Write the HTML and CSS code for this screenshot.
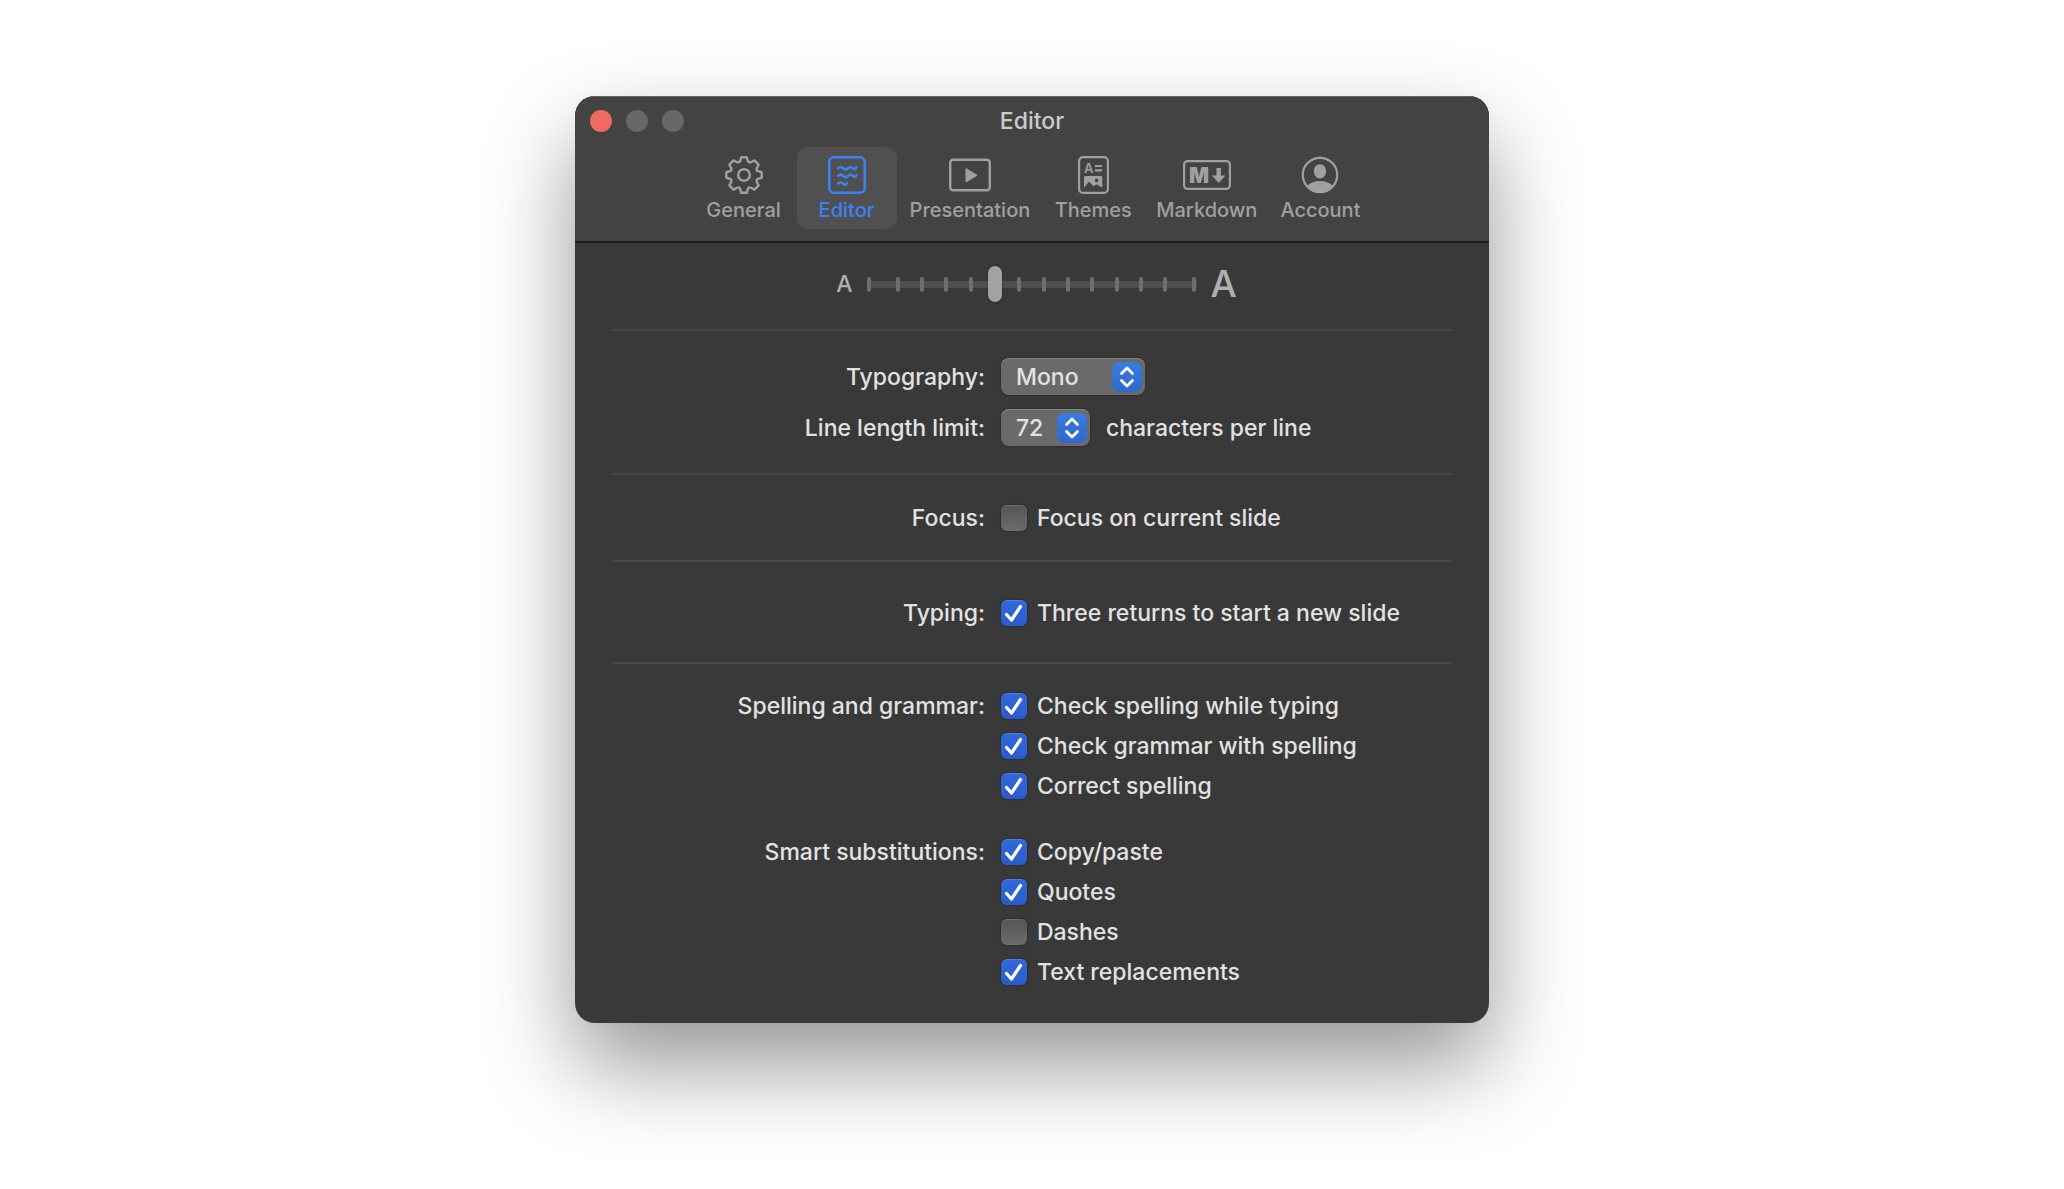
FILE: index.html
```html
<!DOCTYPE html>
<html lang="en">
<head>
  <meta charset="UTF-8">
  <meta name="viewport" content="width=device-width, initial-scale=1.0">
  <title>Editor</title>
  <link rel="stylesheet" href="styles.css">
</head>
<body>

  <div class="window">
    <header class="titlebar">
      <div class="title-row">
        <div class="lights">
          <button class="light close" aria-label="Close"></button>
          <button class="light" aria-label="Minimize"></button>
          <button class="light" aria-label="Zoom"></button>
        </div>
        <h1>Editor</h1>
      </div>

      <nav class="toolbar">
        <button class="tab">
          <svg width="38" height="38" viewBox="-19 -19 38 38" fill="none" stroke="currentColor" stroke-width="2.4" stroke-linejoin="round">
            <path d="M-2.8-17.7H2.8L3.8-14Q4.7-12 6.9-12.8L10.4-14.6L14.6-10.4L12.8-6.9Q12-4.7 14-3.8L17.7-2.8V2.8L14 3.8Q12 4.7 12.8 6.9L14.6 10.4L10.4 14.6L6.9 12.8Q4.7 12 3.8 14L2.8 17.7H-2.8L-3.8 14Q-4.7 12-6.9 12.8L-10.4 14.6L-14.6 10.4L-12.8 6.9Q-12 4.7-14 3.8L-17.7 2.8V-2.8L-14-3.8Q-12-4.7-12.8-6.9L-14.6-10.4L-10.4-14.6L-6.9-12.8Q-4.7-12-3.8-14Z"/>
            <circle r="5.8"/>
          </svg>
          <span>General</span>
        </button>
        <button class="tab active">
          <svg width="38" height="38" viewBox="0 0 38 38" fill="none" stroke="currentColor" stroke-width="2.6" stroke-linecap="round">
            <rect x="1.3" y="1.3" width="35.4" height="35.4" rx="4.5"/>
            <path d="M10 12.2q2.500-2.400 5 0t5 0t5 0t3.400-.8M10 19.900q2.500-2.400 5 0t5 0t5 0t3.400-.8M10 27.600q2.500-2.400 5 0t4-.4"/>
          </svg>
          <span>Editor</span>
        </button>
        <button class="tab">
          <svg width="42" height="38" viewBox="0 0 42 38" fill="none" stroke="currentColor" stroke-width="2.4">
            <rect x="1.2" y="3.7" width="39.6" height="30.6" rx="3"/>
            <path d="M17 12.5v13.5l11-6.700z" fill="currentColor" stroke-width="1" stroke-linejoin="round"/>
          </svg>
          <span>Presentation</span>
        </button>
        <button class="tab">
          <svg width="31" height="38" viewBox="0 0 31 38" fill="none" stroke="currentColor" stroke-width="2.2">
            <rect x="1.1" y="1.1" width="28.8" height="35.8" rx="4"/>
            <text class="glyph" x="6" y="17" font-size="13">A</text>
            <path d="M17 10h7M17 14.4h7"/>
            <path fill="currentColor" stroke="none" fill-rule="evenodd" d="M7.2 20H23q1.300 0 1.300 1.300V31.500L18.300 28.200L15.600 30.200L11 25.800L6 31.500V21.300Q6 20 7.200 20zM18.500 22.600a1.800 1.800 0 1 0 .1 0z"/>
          </svg>
          <span>Themes</span>
        </button>
        <button class="tab">
          <svg width="48" height="38" viewBox="0 0 48 38" fill="none" stroke="currentColor" stroke-width="2.2">
            <rect x="1.1" y="5.1" width="45.8" height="27.8" rx="3.5"/>
            <text class="glyph heavy" x="6" y="26.5" font-size="21">M</text>
            <path fill="currentColor" stroke="none" d="M33.500 12h4.400v7.500h4.600l-6.800 7.500-6.800-7.500h4.600z"/>
          </svg>
          <span>Markdown</span>
        </button>
        <button class="tab">
          <svg width="38" height="38" viewBox="0 0 38 38" fill="none" stroke="currentColor" stroke-width="2.2">
            <circle cx="19" cy="19" r="17.2"/>
            <path fill="currentColor" stroke="none" d="M19 8.200c3.600 0 6.100 3 6.100 7s-2.500 7.200-6.100 7.200-6.100-3.200-6.100-7.200 2.500-7 6.100-7zM6.500 29.500c3-2.900 7.500-4.500 12.500-4.500s9.500 1.600 12.500 4.500c-3 4.500-7.500 6.700-12.500 6.700s-9.500-2.200-12.500-6.700z"/>
          </svg>
          <span>Account</span>
        </button>
      </nav>
    </header>

    <main>
      <!-- Font size -->
      <section class="section size-section">
        <label class="small-a" for="font-size">A</label>
        <div class="slider">
          <div class="ticks">
            <i></i><i></i><i></i><i></i><i></i><i></i><i></i>
            <i></i><i></i><i></i><i></i><i></i><i></i><i></i>
          </div>
          <input type="range" id="font-size" min="0" max="13" value="5">
        </div>
        <span class="big-a">A</span>
      </section>

      <section class="section font-section">
        <div class="row">
          <label class="name" for="typography">Typography:</label>
          <div class="controls">
            <div class="select">
              <select id="typography">
                <option>Mono</option>
              </select>
              <svg class="arrows" viewBox="0 0 30 30" fill="none" stroke="#fff" stroke-width="2.8" stroke-linecap="round" stroke-linejoin="round">
                <path d="M9.500 11.500L15 6l5.500 5.500M9.500 18.500L15 24l5.500-5.500"/>
              </svg>
            </div>
          </div>
        </div>
        <div class="row">
          <label class="name" for="line-length">Line length limit:</label>
          <div class="controls">
            <div class="select narrow">
              <select id="line-length">
                <option>72</option>
              </select>
              <svg class="arrows" viewBox="0 0 30 30" fill="none" stroke="#fff" stroke-width="2.8" stroke-linecap="round" stroke-linejoin="round">
                <path d="M9.500 11.500L15 6l5.500 5.500M9.500 18.500L15 24l5.500-5.500"/>
              </svg>
            </div>
            <span>characters per line</span>
          </div>
        </div>
      </section>

      <section class="section focus-section">
        <div class="row">
          <span class="name">Focus:</span>
          <div class="checks">
            <label><input type="checkbox"> Focus on current slide</label>
          </div>
        </div>
      </section>

      <section class="section typing-section">
        <div class="row">
          <span class="name">Typing:</span>
          <div class="checks">
            <label><input type="checkbox" checked> Three returns to start a new slide</label>
          </div>
        </div>
      </section>

      <section class="section last-section">
        <div class="row">
          <span class="name">Spelling and grammar:</span>
          <div class="checks">
            <label><input type="checkbox" checked> Check spelling while typing</label>
            <label><input type="checkbox" checked> Check grammar with spelling</label>
            <label><input type="checkbox" checked> Correct spelling</label>
          </div>
        </div>
        <div class="row">
          <span class="name">Smart substitutions:</span>
          <div class="checks">
            <label><input type="checkbox" checked> Copy/paste</label>
            <label><input type="checkbox" checked> Quotes</label>
            <label><input type="checkbox"> Dashes</label>
            <label><input type="checkbox" checked> Text replacements</label>
          </div>
        </div>
      </section>
    </main>
  </div>

</body>
</html>
```
FILE: styles.css
```css
/* --------- Base --------- */
* { box-sizing: border-box; }
body {
  margin: 0;
  min-height: 100vh;
  padding: 96px 20px;
  background: #fff;
  color: #e2e2e2;
  font-family: Inter, "Liberation Sans", sans-serif;
  font-size: 23px;
  font-weight: 500;
  line-height: 26px;
}
button, select, input { font: inherit; color: inherit; margin: 0; }

.window {
  max-width: 914px;
  margin: 0 auto;
  background: #393939;
  border-radius: 20px;
  overflow: hidden;
  box-shadow: 0 42px 90px rgba(0,0,0,0.42);
}

/* --------- Title bar --------- */
.titlebar {
  background: #434343;
  border-bottom: 2px solid #1c1c1c;
  box-shadow: inset 0 1px 0 #686868;
  padding-bottom: 12px;
}
.title-row {
  display: grid;
  grid-template-columns: 1fr auto 1fr;
  align-items: center;
  padding: 12px 15px 13px;
}
.title-row h1 { margin: 0; font-size: 23px; font-weight: 500; color: #cbcbcb; }
.lights { display: flex; gap: 14px; }
.light { width: 22px; height: 22px; padding: 0; border: none; border-radius: 50%; background: #686868; }
.light.close { background: #ee6b60; }

.toolbar { display: flex; justify-content: center; gap: 3px; }
.tab {
  display: flex;
  flex-direction: column;
  align-items: center;
  gap: 4px;
  min-width: 100px;
  padding: 9px 10px 7px;
  border: none;
  border-radius: 10px;
  background: none;
  color: #a0a0a0;
  font-size: 20px;
  line-height: 24px;
}
.tab.active { background: #505050; color: #3b82f7; }
.glyph { font-family: Inter, sans-serif; font-weight: 600; fill: currentColor; stroke: none; }
.glyph.heavy { font-weight: 900; }

/* --------- Sections --------- */
main { padding: 0 37px; }
.section { padding: 29px 0; border-bottom: 2px solid #484848; }
.size-section {
  display: flex;
  justify-content: center;
  align-items: center;
  gap: 14px;
  padding: 22px 0 26px 9px;
  color: #b0b0b0;
}
.font-section { display: grid; gap: 14px; padding: 27px 0; }
.focus-section { padding-top: 30px; }
.typing-section { padding: 38px 0 36px; }
.last-section { display: grid; gap: 40px; padding-bottom: 38px; border-bottom: none; }

.row { display: grid; grid-template-columns: 43fr 52fr; column-gap: 16px; }
.name { text-align: right; align-self: start; }
.font-section .name { align-self: center; }
.controls { display: flex; align-items: center; gap: 16px; }

/* --------- Slider --------- */
.big-a { font-size: 37px; line-height: 38px; }
.slider { display: grid; align-items: center; width: 330px; height: 38px; }
.slider > * { grid-area: 1 / 1; }
.ticks {
  display: flex;
  justify-content: space-between;
  background: linear-gradient(#4d4d4d, #4d4d4d) center / 100% 7px no-repeat;
}
.ticks i { width: 4px; height: 15px; border-radius: 2px; background: #6e6e6e; }
.ticks i:first-child { margin-right: 5px; }
.ticks i:last-child { margin-left: 5px; }
input[type="range"] { appearance: none; width: 100%; height: 38px; background: none; }
input[type="range"]::-webkit-slider-thumb {
  appearance: none;
  width: 14px;
  height: 36px;
  border-radius: 7px;
  background: #a2a2a2;
  box-shadow: 0 0 2px rgba(0,0,0,0.5);
}

/* --------- Pop-up buttons --------- */
.select { display: grid; align-items: center; width: 144px; }
.select.narrow { width: 89px; }
.select > * { grid-area: 1 / 1; }
.select select {
  appearance: none;
  width: 100%;
  height: 37px;
  padding: 0 15px;
  border: none;
  border-radius: 8px;
  background: #6a6a6a;
  box-shadow: inset 0 1px 0 #838383, 0 0 2px rgba(0,0,0,0.5);
}
.arrows {
  justify-self: end;
  width: 30px;
  height: 30px;
  margin-right: 3px;
  border-radius: 7px;
  background: linear-gradient(#3a7ce0, #2f68cb);
  pointer-events: none;
}

/* --------- Check boxes --------- */
.checks { display: grid; gap: 14px; justify-items: start; }
.checks label { display: flex; align-items: center; gap: 10px; }
input[type="checkbox"] {
  appearance: none;
  width: 26px;
  height: 26px;
  border-radius: 6px;
  background: linear-gradient(#555, #6c6c6c);
  box-shadow: inset 0 1px 0 rgba(255,255,255,0.14), 0 0 2px rgba(0,0,0,0.5);
}
input[type="checkbox"]:checked {
  background:
    url("data:image/svg+xml,%3Csvg xmlns='http://www.w3.org/2000/svg' viewBox='0 0 26 26'%3E%3Cpath d='M5.500 14.500l5 5.500L19.500 6.500' fill='none' stroke='%23fff' stroke-width='3.200' stroke-linecap='round' stroke-linejoin='round'/%3E%3C/svg%3E"),
    linear-gradient(#3269dc, #2a5bcd);
}
```
